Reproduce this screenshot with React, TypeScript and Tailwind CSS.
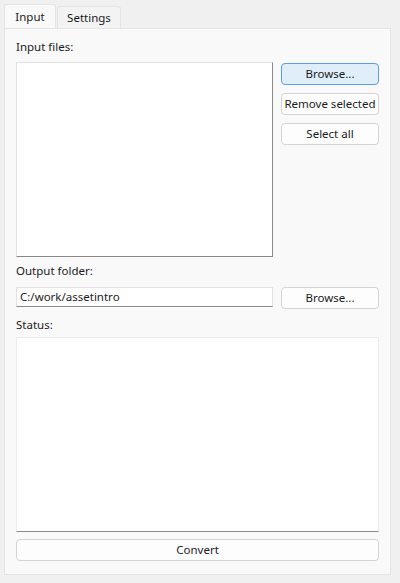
import React from 'react';

const font = { fontFamily: '"Segoe UI", "Noto Sans", "Open Sans", sans-serif' };

const Button = ({ label, primary, className = '' }: { label: string; primary?: boolean; className?: string }) => (
  <button
    className={`h-[22px] rounded-[4px] border text-[11.5px] leading-none text-[#1b1b1b] ${
      primary ? 'border-[#5aa0e0] bg-[#e0eef9]' : 'border-[#d4d4d4] bg-[#fdfdfd]'
    } ${className}`}
  >
    {label}
  </button>
);

const App = () => {
  return (
    <div className="h-[583px] w-[400px] bg-[#f0f0f0] pl-1 pr-[9px] pt-1 text-[11.5px] text-[#1b1b1b]" style={font}>
      <div className="flex h-6 items-end">
        <div className="flex h-6 w-[52px] items-center justify-center rounded-t-[3px] border border-b-0 border-[#e4e4e4] bg-[#f9f9f9]">
          Input
        </div>
        <div className="ml-[1px] flex h-[22px] w-[64px] items-center justify-center rounded-t-[3px] border border-b-0 border-[#e4e4e4] bg-[#f3f3f3]">
          Settings
        </div>
      </div>
      <div className="flex h-[547px] flex-col border border-[#e4e4e4] bg-[#f9f9f9] px-[11px] pt-[9px]">
        <div className="h-[17px] leading-[17px]">Input files:</div>
        <div className="mt-[7px] flex gap-2">
          <div className="h-[195px] w-[257px] border border-[#e2e2e2] border-b-[#8a8a8a] border-r-[#8a8a8a] bg-white" />
          <div className="flex w-[98px] flex-col gap-2 pt-[1px]">
            <Button label="Browse..." primary />
            <Button label="Remove selected" />
            <Button label="Select all" />
          </div>
        </div>
        <div className="mt-[5px] h-[17px] leading-[17px]">Output folder:</div>
        <div className="mt-[8px] flex gap-2">
          <div className="flex h-[20px] w-[257px] items-center border border-[#e2e2e2] border-b-[#8a8a8a] bg-white px-[3px]">
            C:/work/assetintro
          </div>
          <Button label="Browse..." className="w-[98px]" />
        </div>
        <div className="mt-[7px] h-[17px] leading-[17px]">Status:</div>
        <div className="mt-[4px] h-[195px] w-[363px] border border-[#ececec] border-b-[#8a8a8a] bg-white" />
        <Button label="Convert" className="mt-[7px] w-[363px]" />
      </div>
    </div>
  );
};

export default App;
